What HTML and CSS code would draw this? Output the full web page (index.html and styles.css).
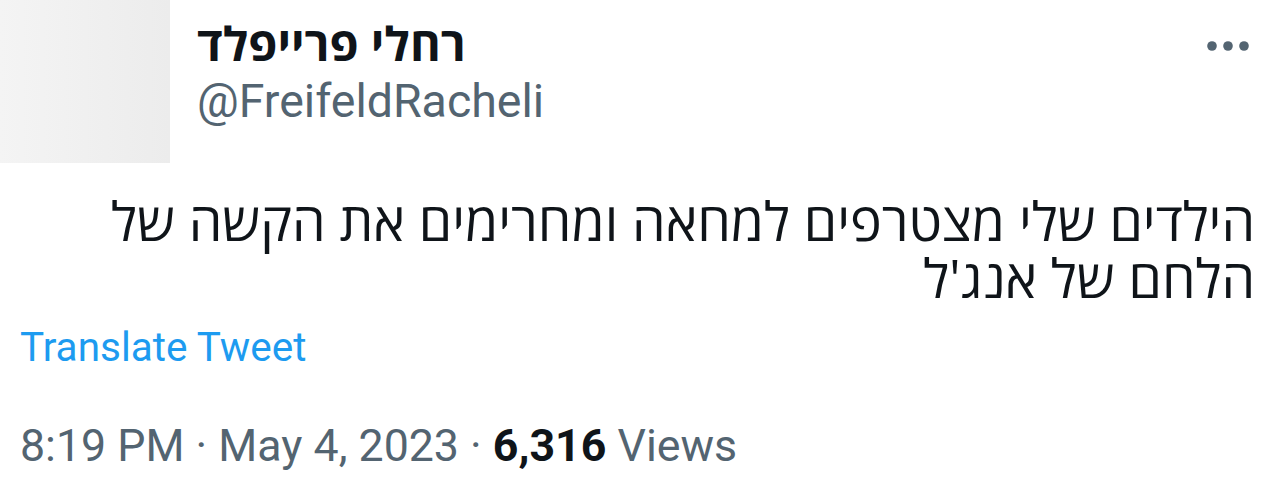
FILE: index.html
```html
<!DOCTYPE html>
<html lang="en">
<head>
<meta charset="utf-8">
<title>Tweet</title>
<link rel="stylesheet" href="styles.css">
</head>
<body>
<div class="tweet">
  <header class="head">
    <div class="avatar"></div>
    <div class="who">
      <div class="name" dir="rtl">רחלי פרייפלד</div>
      <div class="handle">@FreifeldRacheli</div>
    </div>
    <div class="more" aria-label="More">
      <svg width="44" height="12" viewBox="0 0 44 12"><circle cx="6" cy="6" r="4.8" fill="#536471"/><circle cx="22" cy="6" r="4.8" fill="#536471"/><circle cx="38" cy="6" r="4.8" fill="#536471"/></svg>
    </div>
  </header>
  <p class="text" dir="rtl">הילדים שלי מצטרפים למחאה ומחרימים את הקשה של הלחם של אנג'ל</p>
  <a class="translate">Translate Tweet</a>
  <div class="meta">8:19 PM · May 4, 2023 · <b>6,316</b> Views</div>
</div>
</body>
</html>
```
FILE: styles.css
```css
html, body {
  margin: 0;
  padding: 0;
  background: #ffffff;
}
.tweet {
  width: 1280px;
  height: 502px;
  overflow: hidden;
  font-family: Roboto, "Open Sans", "DejaVu Sans", sans-serif;
  color: #0f1419;
}
.head {
  display: flex;
  align-items: flex-start;
}
.avatar {
  width: 170px;
  height: 163px;
  background: linear-gradient(90deg, #f4f4f4, #ececec);
  flex: none;
}
.who {
  padding-left: 27px;
  padding-top: 15px;
  display: flex;
  flex-direction: column;
  align-items: flex-start;
}
.name {
  font-family: "Open Sans", "DejaVu Sans", sans-serif;
  font-size: 47px;
  font-weight: 700;
  line-height: 56px;
}
.handle {
  margin-top: 4px;
  font-size: 46.5px;
  line-height: 52px;
  color: #536471;
}
.more {
  margin-left: auto;
  margin-right: 30px;
  margin-top: 40px;
  display: flex;
}
.text {
  margin: 29px 25px 0 90px;
  font-family: "Open Sans", "DejaVu Sans", sans-serif;
  font-size: 53.5px;
  line-height: 57px;
  text-align: right;
}
.translate {
  display: block;
  margin: 17px 0 0 20px;
  font-size: 40.5px;
  line-height: 48px;
  color: #1d9bf0;
}
.meta {
  margin: 49px 0 0 20px;
  font-size: 44.7px;
  line-height: 52px;
  color: #536471;
}
.meta b {
  color: #0f1419;
  font-weight: 700;
}
```
